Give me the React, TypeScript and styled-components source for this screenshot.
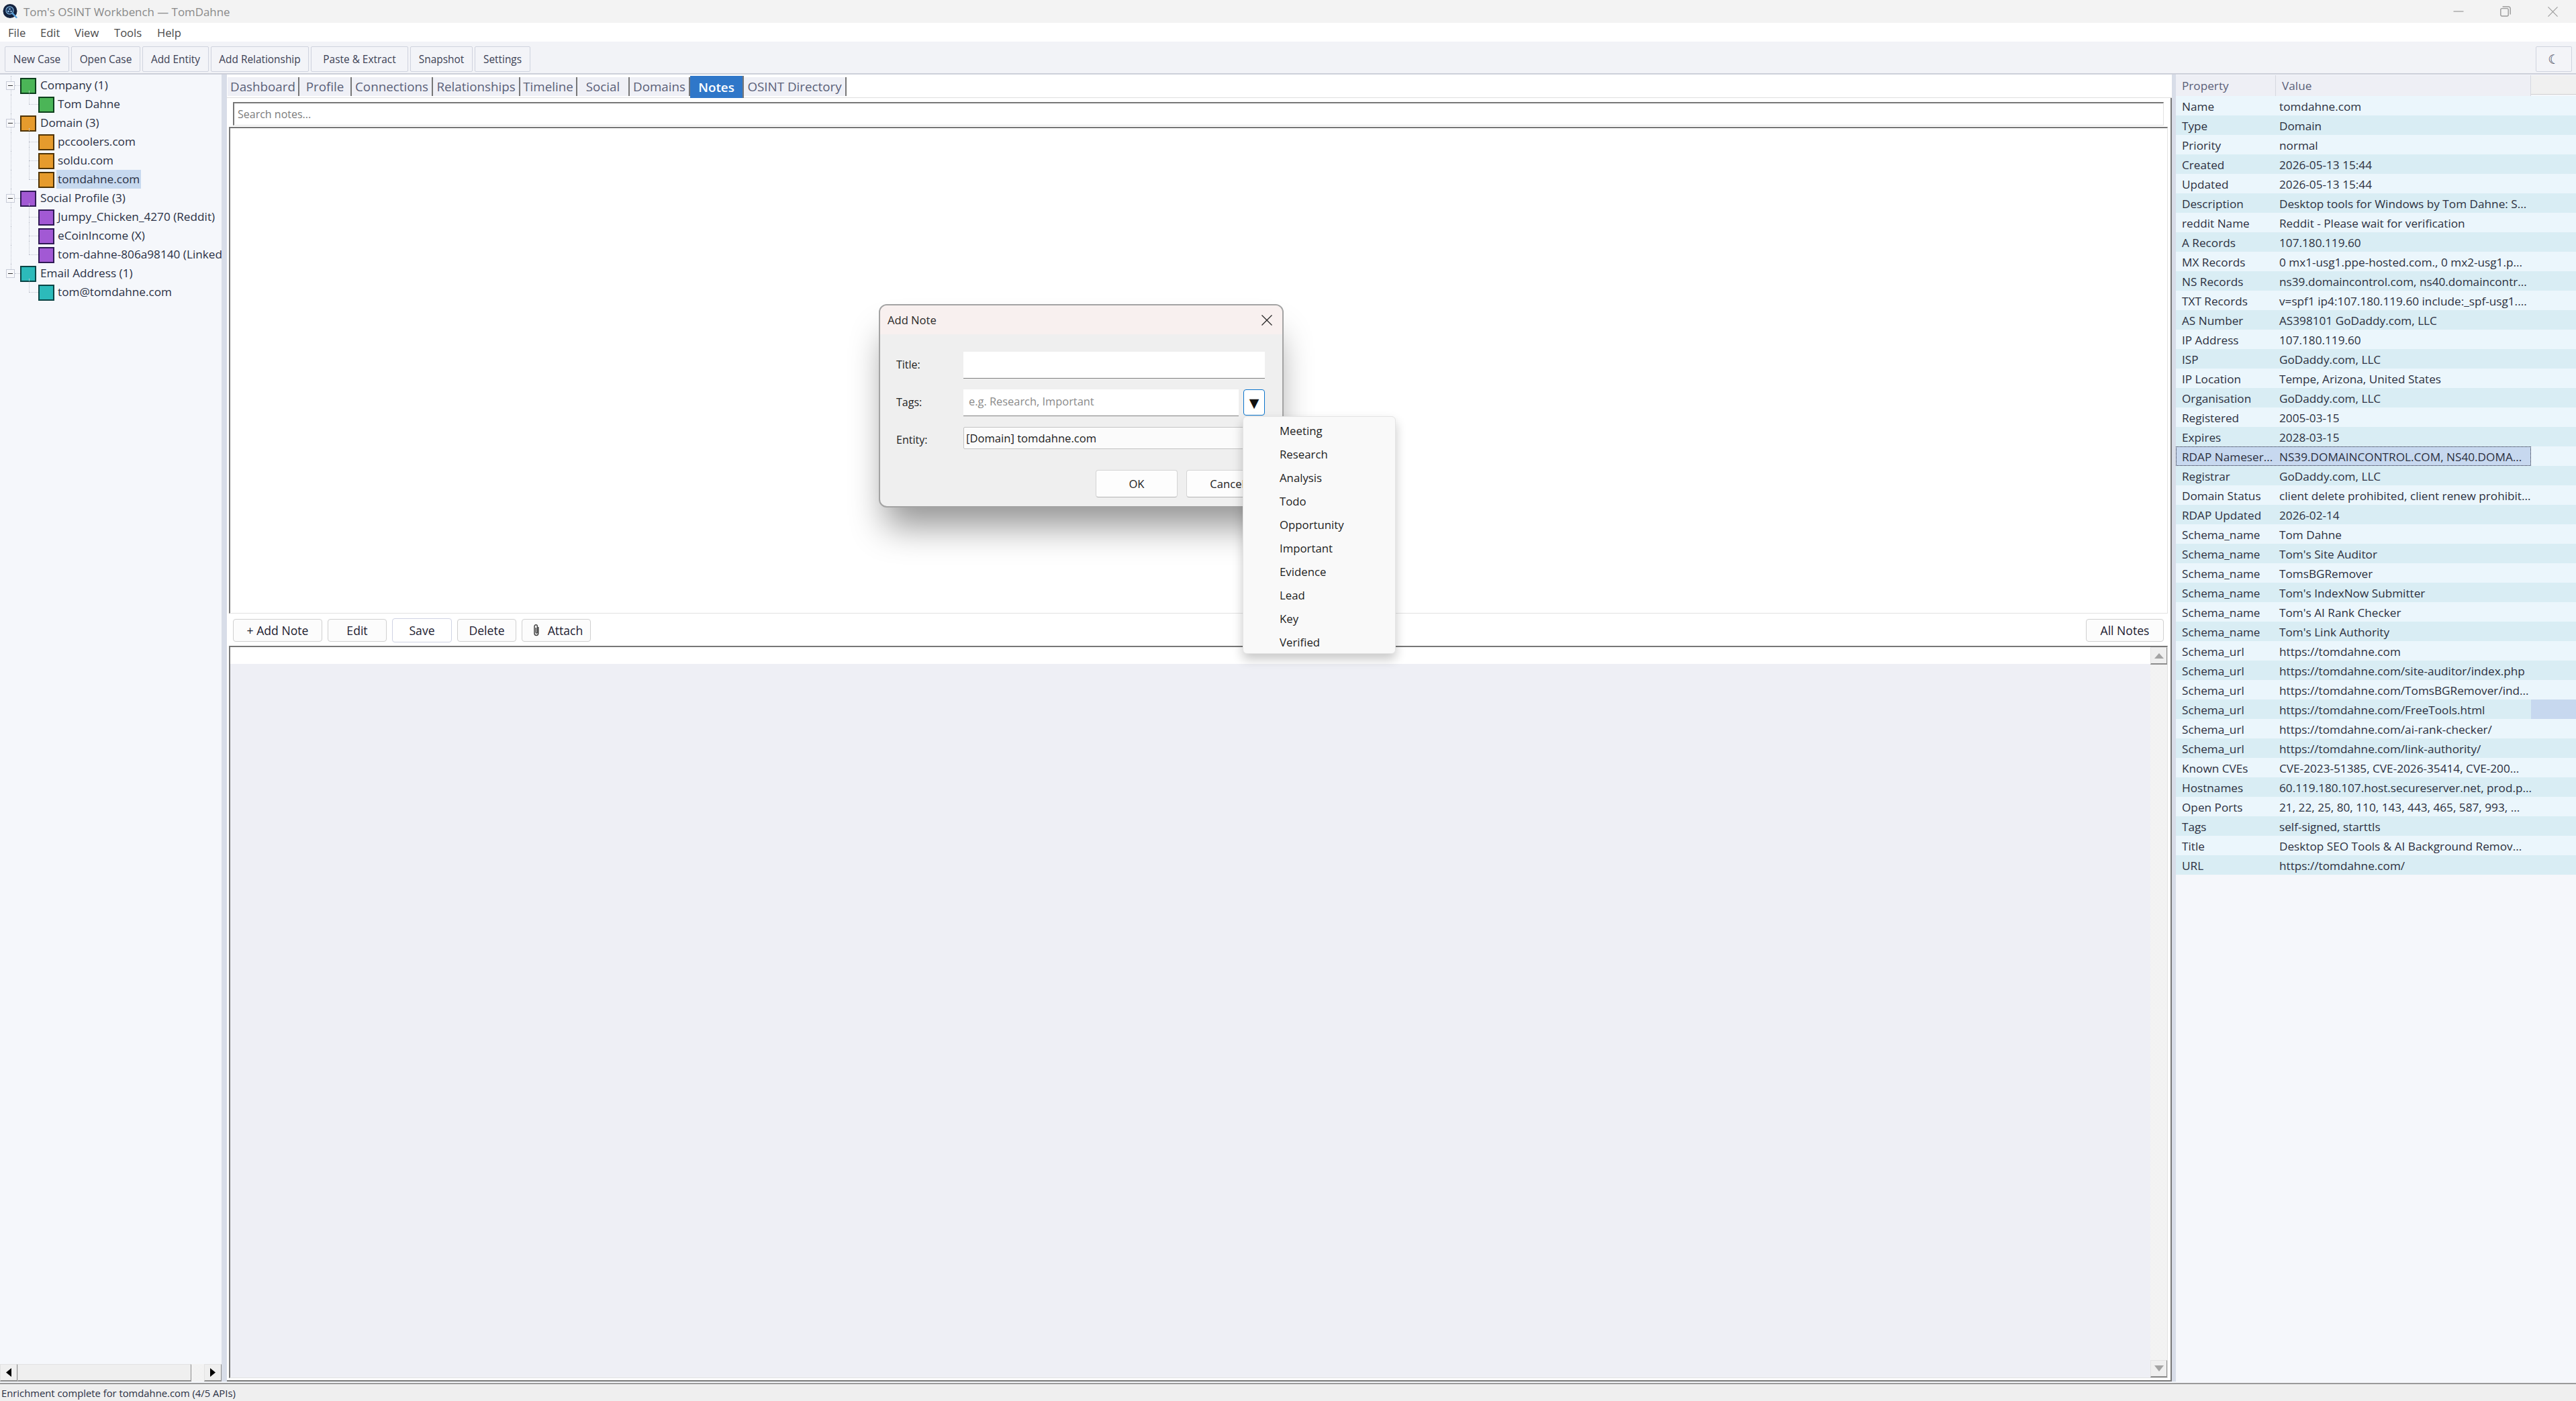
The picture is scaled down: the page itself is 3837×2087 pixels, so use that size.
import React from "react";
import styled, { createGlobalStyle } from "styled-components";

const UI_FONT = `"Open Sans", "Noto Sans", "Liberation Sans", sans-serif`;

const GlobalStyle = createGlobalStyle`
  html, body {
    margin: 0;
    padding: 0;
    background: #f5f7fb;
  }
  * {
    box-sizing: border-box;
  }
`;

const Shell = styled.div`
  position: relative;
  width: 3837px;
  height: 2087px;
  overflow: hidden;
  display: flex;
  flex-direction: column;
  font-family: ${UI_FONT};
  font-size: 17.2px;
  color: #2c3040;
`;

const TitleBar = styled.div`
  height: 34px;
  flex: none;
  background: #f3f3f3;
  display: flex;
  align-items: center;
  padding-left: 4px;
  color: #8a8a8a;
  font-size: 16.9px;
`;

const AppTitle = styled.span`
  margin-left: 7px;
  flex: 1;
`;

const WindowButton = styled.div`
  width: 70px;
  height: 34px;
  display: flex;
  align-items: center;
  justify-content: center;
`;

const MenuBar = styled.div`
  height: 28px;
  flex: none;
  background: #fff;
  display: flex;
  align-items: center;
  color: #4a4a4a;
  font-size: 16.6px;
  padding-left: 12px;
`;

const MenuItem = styled.span<{ $w: number }>`
  width: ${(p) => p.$w}px;
`;

const ToolBar = styled.div`
  height: 49px;
  flex: none;
  background: #f2f3f7;
  border-bottom: 2px solid #cdd0da;
  display: flex;
  align-items: flex-start;
  padding: 7px 6px 0 7px;
  gap: 3px;
`;

const ToolButton = styled.div<{ $w: number }>`
  width: ${(p) => p.$w}px;
  height: 38px;
  flex: none;
  border: 1px solid #cfd3de;
  border-radius: 2px;
  background: #f3f4f8;
  color: #3c4154;
  font-size: 15.4px;
  display: flex;
  align-items: center;
  justify-content: center;
`;

const ThemeButton = styled(ToolButton)`
  margin-left: auto;
  font-family: "DejaVu Sans", sans-serif;
  font-size: 19px;
`;

const MainRow = styled.div`
  flex: 1;
  min-height: 0;
  display: flex;
`;

const TreePanel = styled.div`
  width: 330px;
  flex: none;
  background: #f5f7fb;
  display: flex;
  flex-direction: column;
  padding-top: 2px;
  overflow: hidden;
`;

const TreeBody = styled.div`
  position: relative;
  flex: 1;
  min-height: 0;
`;

const TreeRow = styled.div`
  height: 28px;
  display: flex;
  align-items: center;
  position: relative;
  white-space: nowrap;
`;

const Toggle = styled.div`
  position: absolute;
  left: 9px;
  top: 8px;
  width: 13px;
  height: 13px;
  border: 1px solid #c8ccd8;
  background: #f7f8fb;
  display: flex;
  align-items: center;
  justify-content: center;
  &::after {
    content: "";
    width: 7px;
    height: 1px;
    background: #333;
  }
`;

const Guide = styled.div<{ $child?: boolean; $last?: boolean }>`
  position: absolute;
  left: ${(p) => (p.$child ? 43 : 16)}px;
  top: ${(p) => (p.$child ? -6 : 0)}px;
  bottom: ${(p) => (p.$last ? 14 : 0)}px;
  border-left: 1px dotted #c2c6d0;
`;

const GuideArm = styled.div<{ $child?: boolean }>`
  position: absolute;
  left: ${(p) => (p.$child ? 43 : 22)}px;
  width: ${(p) => (p.$child ? 14 : 8)}px;
  top: 14px;
  border-top: 1px dotted #c2c6d0;
`;

const Swatch = styled.div<{ $fill: string; $edge: string }>`
  width: 24px;
  height: 24px;
  flex: none;
  background: ${(p) => p.$fill};
  border: 2px solid ${(p) => p.$edge};
  margin-top: 1px;
`;

const TreeLabel = styled.span<{ $child?: boolean; $selected?: boolean }>`
  height: 28px;
  line-height: 28px;
  margin-left: ${(p) => (p.$child ? 3 : 4)}px;
  padding: 0 2px;
  background: ${(p) => (p.$selected ? "#c7d9ef" : "transparent")};
  color: #2a3044;
`;

const ParentIndent = styled.div`
  width: 30px;
  flex: none;
`;

const ChildIndent = styled.div`
  width: 57px;
  flex: none;
`;

const HScroll = styled.div`
  height: 26px;
  flex: none;
  display: flex;
  background: repeating-conic-gradient(#fff 0 25%, #e6e6e6 0 50%) 0 0 / 2px 2px;
`;

const ScrollBtn = styled.div<{ $w?: number }>`
  width: ${(p) => p.$w ?? 25}px;
  flex: none;
  background: #efefef;
  border-top: 1px solid #e2e2e2;
  border-left: 1px solid #e2e2e2;
  border-right: 1px solid #8c8c8c;
  border-bottom: 2px solid #8c8c8c;
  display: flex;
  align-items: center;
  justify-content: center;
`;

const HTrack = styled.div`
  flex: 1;
`;

const Splitter = styled.div<{ $w: number }>`
  width: ${(p) => p.$w}px;
  flex: none;
  background: #d8dde8;
`;

const Center = styled.div`
  flex: 1;
  min-width: 0;
  background: #fff;
  display: flex;
  flex-direction: column;
  padding-top: 2px;
`;

const TabBar = styled.div`
  height: 33px;
  flex: none;
  display: flex;
  align-items: flex-end;
  padding-left: 1px;
  border-bottom: 1px solid #dfdfdf;
`;

const Tab = styled.div<{ $w: number; $active?: boolean }>`
  width: ${(p) => p.$w}px;
  height: ${(p) => (p.$active ? 33 : 28)}px;
  margin-bottom: ${(p) => (p.$active ? -1 : 2)}px;
  flex: none;
  background: ${(p) => (p.$active ? "#2f77c9" : "#eff0f6")};
  color: ${(p) => (p.$active ? "#fff" : "#5a6078")};
  font-weight: ${(p) => (p.$active ? 600 : 500)};
  font-size: 18.8px;
  border-right: 2px solid #777;
  display: flex;
  align-items: center;
  justify-content: center;
  white-space: nowrap;
`;

const TabPane = styled.div`
  flex: 1;
  min-height: 0;
  display: flex;
  flex-direction: column;
  border-right: 2px solid #777;
  border-bottom: 2px solid #777;
  padding: 6px 4px 3px 3px;
`;

const SearchBox = styled.div`
  height: 35px;
  flex: none;
  margin: 0 6px 2px 6px;
  border-top: 2px solid #777;
  border-left: 2px solid #777;
  border-bottom: 1px solid #e2e2e2;
  border-right: 1px solid #e2e2e2;
  color: #7c7c7c;
  font-size: 16px;
  display: flex;
  align-items: center;
  padding-left: 5px;
`;

const NotesList = styled.div`
  height: 725px;
  flex: none;
  border-top: 2px solid #777;
  border-left: 2px solid #777;
  border-right: 1px solid #e2e2e2;
  border-bottom: 1px solid #e2e2e2;
`;

const NoteActions = styled.div`
  height: 48px;
  flex: none;
  display: flex;
  align-items: center;
  gap: 8px;
  padding: 2px 6px 0 6px;
`;

const ActionButton = styled.div<{ $w: number; $hover?: boolean; $far?: boolean }>`
  width: ${(p) => p.$w}px;
  height: ${(p) => (p.$hover ? 36 : 34)}px;
  flex: none;
  margin-left: ${(p) => (p.$far ? "auto" : 0)};
  border: 1px solid ${(p) => (p.$hover ? "#cfd3e4" : "#d0d0d0")};
  border-radius: 4px;
  background: ${(p) => (p.$hover ? "#fff" : "#fcfcfc")};
  color: #1c2030;
  font-size: 17.6px;
  display: flex;
  align-items: center;
  justify-content: center;
  gap: 11px;
`;

const AttachButton = styled(ActionButton)`
  padding-left: 4px;
`;

const DetailPanel = styled.div`
  flex: 1;
  min-height: 0;
  display: flex;
  border-top: 2px solid #777;
  border-left: 2px solid #777;
  border-right: 1px solid #e2e2e2;
  border-bottom: 1px solid #e2e2e2;
`;

const DetailBody = styled.div`
  flex: 1;
  display: flex;
  flex-direction: column;
`;

const DetailStrip = styled.div`
  height: 25px;
  flex: none;
  background: #fff;
`;

const DetailFill = styled.div`
  flex: 1;
  background: #eeeff5;
`;

const VScroll = styled.div`
  width: 25px;
  flex: none;
  display: flex;
  flex-direction: column;
  justify-content: space-between;
  background: repeating-conic-gradient(#fff 0 25%, #e6e6e6 0 50%) 0 0 / 2px 2px;
`;

const VBtn = styled(ScrollBtn)`
  width: 25px;
  height: 26px;
`;

const PropsPanel = styled.div`
  width: 596px;
  flex: none;
  background: #f5f7fb;
  padding-top: 1px;
  display: flex;
  flex-direction: column;
`;

const PropsHeader = styled.div`
  height: 31px;
  flex: none;
  display: flex;
  color: #5a6078;
`;

const HeadCell = styled.div<{ $w: number; $edge?: boolean }>`
  width: ${(p) => p.$w}px;
  flex: none;
  background: #eeeff5;
  border-right: ${(p) => (p.$edge ? "1px solid #d6d8e0" : "none")};
  display: flex;
  align-items: center;
  padding-left: 9px;
`;

const HeadRest = styled.div`
  flex: 1;
  background: #f0f0f0;
  border-bottom: 1px solid #d0d0d0;
  margin-bottom: 2px;
`;

const PropRow = styled.div<{ $odd: boolean }>`
  height: 29px;
  flex: none;
  display: flex;
  background: ${(p) => (p.$odd ? "#d9edf4" : "#ebf6fc")};
`;

const PropCells = styled.div<{ $selected?: boolean }>`
  width: 529px;
  flex: none;
  display: flex;
  align-items: center;
  padding-top: 1px;
  background: ${(p) => (p.$selected ? "#c7d8ef" : "transparent")};
  outline: ${(p) => (p.$selected ? "1px dotted #223" : "none")};
  outline-offset: -1px;
`;

const RowEnd = styled.div<{ $selected?: boolean }>`
  flex: 1;
  background: ${(p) => (p.$selected ? "#c7d8ef" : "transparent")};
`;

const PropName = styled.span`
  width: 154px;
  flex: none;
  padding-left: 9px;
  white-space: nowrap;
`;

const PropValue = styled.span`
  white-space: nowrap;
`;

const StatusBar = styled.div`
  height: 27px;
  flex: none;
  background: #efefef;
  border-top: 2px solid #9a9a9a;
  font-size: 14.8px;
  display: flex;
  align-items: center;
  padding-left: 2px;
  color: #2a3044;
  margin-top: 2px;
`;

const Dialog = styled.div`
  position: absolute;
  left: 1309px;
  top: 453px;
  width: 603px;
  height: 303px;
  border: 2px solid #a3a3a3;
  border-radius: 12px;
  background: #efefef;
  box-shadow: 0 38px 52px -10px rgba(0, 0, 0, 0.42);
  display: flex;
  flex-direction: column;
  overflow: hidden;
`;

const DialogHead = styled.div`
  height: 43px;
  flex: none;
  background: #f8f0ef;
  display: flex;
  align-items: center;
  justify-content: space-between;
  padding: 0 15px 0 11px;
  color: #2a2a2a;
  font-size: 16.6px;
`;

const DialogForm = styled.div`
  flex: 1;
  display: grid;
  grid-template-columns: 100px 1fr;
  grid-auto-rows: 56px;
  padding: 26px 26px 0 24px;
  align-items: start;
`;

const FieldLabel = styled.label`
  color: #222;
  font-size: 16px;
  padding-top: 8px;
`;

const TextField = styled.div`
  height: 40px;
  background: #fff;
  border-bottom: 1px solid #808080;
  color: #8a8a8a;
  font-size: 16.4px;
  display: flex;
  align-items: center;
  padding: 0 0 4px 8px;
  flex: 1;
`;

const TagsLine = styled.div`
  display: flex;
  gap: 7px;
`;

const TagsArrow = styled.div`
  width: 32px;
  height: 39px;
  flex: none;
  background: #fff;
  border: 1.5px solid #0a74cc;
  border-radius: 4px;
  font-size: 19px;
  color: #111;
  display: flex;
  align-items: center;
  justify-content: center;
  font-family: "DejaVu Sans", sans-serif;
`;

const EntityField = styled.div`
  height: 33px;
  background: #fbfbfb;
  border: 1px solid #c4c4c4;
  border-radius: 2px;
  color: #1c1c1c;
  font-size: 16.6px;
  display: flex;
  align-items: center;
  padding-left: 3px;
`;

const DialogFoot = styled.div`
  height: 57px;
  flex: none;
  display: flex;
  justify-content: flex-end;
  gap: 13px;
  padding: 3px 21px 0 0;
`;

const DialogButton = styled.div`
  width: 122px;
  height: 41px;
  background: #fdfdfd;
  border: 1px solid #d4d4d4;
  border-bottom-color: #b4b4b4;
  border-radius: 4px;
  color: #1c1c1c;
  font-size: 16.6px;
  display: flex;
  align-items: center;
  justify-content: center;
`;

const TagMenu = styled.div`
  position: absolute;
  left: 1851px;
  top: 620px;
  width: 228px;
  height: 354px;
  background: #f9f9f9;
  border: 1px solid #e4e4e4;
  border-radius: 6px;
  box-shadow: 0 8px 16px rgba(0, 0, 0, 0.22);
  display: flex;
  flex-direction: column;
  padding: 3px 0;
`;

const TagOption = styled.div`
  height: 35px;
  flex: none;
  display: flex;
  align-items: center;
  padding-left: 54px;
  color: #1c1c1c;
  font-size: 16.8px;
`;

type TreeGroup = {
  name: string;
  fill: string;
  edge: string;
  children: string[];
};

const TREE: TreeGroup[] = [
  { name: "Company (1)", fill: "#4bb557", edge: "#0d3f1d", children: ["Tom Dahne"] },
  { name: "Domain (3)", fill: "#e69b2d", edge: "#4f3305", children: ["pccoolers.com", "soldu.com", "tomdahne.com"] },
  {
    name: "Social Profile (3)",
    fill: "#a259d4",
    edge: "#2f1a55",
    children: ["Jumpy_Chicken_4270 (Reddit)", "eCoinIncome (X)", "tom-dahne-806a98140 (LinkedIn)"],
  },
  { name: "Email Address (1)", fill: "#2cbaba", edge: "#0a4445", children: ["tom@tomdahne.com"] },
];

const TOOLS: [string, number][] = [
  ["New Case", 96],
  ["Open Case", 103],
  ["Add Entity", 99],
  ["Add Relationship", 146],
  ["Paste & Extract", 145],
  ["Snapshot", 93],
  ["Settings", 83],
];

const TABS: [string, number][] = [
  ["Dashboard", 107],
  ["Profile", 78],
  ["Connections", 121],
  ["Relationships", 130],
  ["Timeline", 85],
  ["Social", 78],
  ["Domains", 90],
  ["Notes", 80],
  ["OSINT Directory", 153],
];

const PROPS: [string, string][] = [
  ["Name", "tomdahne.com"],
  ["Type", "Domain"],
  ["Priority", "normal"],
  ["Created", "2026-05-13 15:44"],
  ["Updated", "2026-05-13 15:44"],
  ["Description", "Desktop tools for Windows by Tom Dahne: S..."],
  ["reddit Name", "Reddit - Please wait for verification"],
  ["A Records", "107.180.119.60"],
  ["MX Records", "0 mx1-usg1.ppe-hosted.com., 0 mx2-usg1.p..."],
  ["NS Records", "ns39.domaincontrol.com, ns40.domaincontr..."],
  ["TXT Records", "v=spf1 ip4:107.180.119.60 include:_spf-usg1...."],
  ["AS Number", "AS398101 GoDaddy.com, LLC"],
  ["IP Address", "107.180.119.60"],
  ["ISP", "GoDaddy.com, LLC"],
  ["IP Location", "Tempe, Arizona, United States"],
  ["Organisation", "GoDaddy.com, LLC"],
  ["Registered", "2005-03-15"],
  ["Expires", "2028-03-15"],
  ["RDAP Nameser...", "NS39.DOMAINCONTROL.COM, NS40.DOMA..."],
  ["Registrar", "GoDaddy.com, LLC"],
  ["Domain Status", "client delete prohibited, client renew prohibit..."],
  ["RDAP Updated", "2026-02-14"],
  ["Schema_name", "Tom Dahne"],
  ["Schema_name", "Tom's Site Auditor"],
  ["Schema_name", "TomsBGRemover"],
  ["Schema_name", "Tom's IndexNow Submitter"],
  ["Schema_name", "Tom's AI Rank Checker"],
  ["Schema_name", "Tom's Link Authority"],
  ["Schema_url", "https://tomdahne.com"],
  ["Schema_url", "https://tomdahne.com/site-auditor/index.php"],
  ["Schema_url", "https://tomdahne.com/TomsBGRemover/ind..."],
  ["Schema_url", "https://tomdahne.com/FreeTools.html"],
  ["Schema_url", "https://tomdahne.com/ai-rank-checker/"],
  ["Schema_url", "https://tomdahne.com/link-authority/"],
  ["Known CVEs", "CVE-2023-51385, CVE-2026-35414, CVE-200..."],
  ["Hostnames", "60.119.180.107.host.secureserver.net, prod.p..."],
  ["Open Ports", "21, 22, 25, 80, 110, 143, 443, 465, 587, 993, ..."],
  ["Tags", "self-signed, starttls"],
  ["Title", "Desktop SEO Tools & AI Background Remov..."],
  ["URL", "https://tomdahne.com/"],
];

const SELECTED_ROW = 18;
const END_SELECTED_ROW = 31;

const TAG_OPTIONS = ["Meeting", "Research", "Analysis", "Todo", "Opportunity", "Important", "Evidence", "Lead", "Key", "Verified"];

const AppLogo = () => (
  <svg width="24" height="24" viewBox="0 0 24 24">
    <circle cx="11" cy="11.5" r="10.5" fill="#14233f" />
    <circle cx="10.5" cy="10.5" r="5.6" fill="#1d3a63" stroke="#7fb2dc" strokeWidth="1.2" />
    <circle cx="10.5" cy="8.4" r="1.2" fill="#9cc7e8" />
    <circle cx="8.4" cy="12" r="1.2" fill="#9cc7e8" />
    <circle cx="12.6" cy="12" r="1.2" fill="#9cc7e8" />
    <path d="M14.6 14.8 L20.5 21" stroke="#5aa2dc" strokeWidth="2.4" strokeLinecap="round" />
  </svg>
);

const MinimizeIcon = () => (
  <svg width="16" height="16" viewBox="0 0 16 16">
    <path d="M0.5 8 H15.5" stroke="#9a9a9a" strokeWidth="1.2" />
  </svg>
);

const RestoreIcon = () => (
  <svg width="16" height="16" viewBox="0 0 16 16" fill="none" stroke="#9a9a9a" strokeWidth="1.4">
    <rect x="0.8" y="3.6" width="11.4" height="11.4" rx="2" />
    <path d="M3.6 1 H12.5 A2.6 2.6 0 0 1 15.2 3.6 V12.4" />
  </svg>
);

const CloseIcon = ({ color, size }: { color: string; size: number }) => (
  <svg width={size} height={size} viewBox="0 0 16 16">
    <path d="M0.5 0.5 L15.5 15.5 M15.5 0.5 L0.5 15.5" stroke={color} strokeWidth="1.2" />
  </svg>
);

const PaperClip = () => (
  <svg width="12" height="20" viewBox="0 0 12 20" fill="none" stroke="#444" strokeWidth="1.5">
    <path d="M8.8 5 V14.5 A2.9 2.9 0 0 1 3 14.5 V4 A2.2 2.2 0 0 1 7.4 4 V13 A1.1 1.1 0 0 1 5.2 13 V6" />
  </svg>
);

const Tri = ({ dir, color, w, h }: { dir: "l" | "r" | "u" | "d"; color: string; w: number; h: number }) => {
  const pts = {
    l: `${w},0 ${w},${h} 0,${h / 2}`,
    r: `0,0 0,${h} ${w},${h / 2}`,
    u: `0,${h} ${w},${h} ${w / 2},0`,
    d: `0,0 ${w},0 ${w / 2},${h}`,
  }[dir];
  return (
    <svg width={w} height={h} viewBox={`0 0 ${w} ${h}`}>
      <polygon points={pts} fill={color} />
    </svg>
  );
};

export default function App() {
  return (
    <Shell>
      <GlobalStyle />
      <TitleBar>
        <AppLogo />
        <AppTitle>Tom's OSINT Workbench — TomDahne</AppTitle>
        <WindowButton>
          <MinimizeIcon />
        </WindowButton>
        <WindowButton>
          <RestoreIcon />
        </WindowButton>
        <WindowButton>
          <CloseIcon color="#9a9a9a" size={15} />
        </WindowButton>
      </TitleBar>
      <MenuBar>
        <MenuItem $w={48}>File</MenuItem>
        <MenuItem $w={51}>Edit</MenuItem>
        <MenuItem $w={59}>View</MenuItem>
        <MenuItem $w={64}>Tools</MenuItem>
        <MenuItem $w={50}>Help</MenuItem>
      </MenuBar>
      <ToolBar>
        {TOOLS.map(([label, w]) => (
          <ToolButton key={label} $w={w}>
            {label}
          </ToolButton>
        ))}
        <ThemeButton $w={54}>☾</ThemeButton>
      </ToolBar>
      <MainRow>
        <TreePanel>
          <TreeBody>
            {TREE.map((group, gi) => (
              <React.Fragment key={group.name}>
                <TreeRow>
                  <Guide $last={gi === TREE.length - 1} />
                  <Toggle />
                  <GuideArm />
                  <ParentIndent />
                  <Swatch $fill={group.fill} $edge={group.edge} />
                  <TreeLabel>{group.name}</TreeLabel>
                </TreeRow>
                {group.children.map((child, ci) => (
                  <TreeRow key={child}>
                    {gi < TREE.length - 1 && <Guide />}
                    <Guide $child $last={ci === group.children.length - 1} />
                    <GuideArm $child />
                    <ChildIndent />
                    <Swatch $fill={group.fill} $edge={group.edge} />
                    <TreeLabel $child $selected={child === "tomdahne.com"}>
                      {child}
                    </TreeLabel>
                  </TreeRow>
                ))}
              </React.Fragment>
            ))}
          </TreeBody>
          <HScroll>
            <ScrollBtn $w={26}>
              <Tri dir="l" color="#000" w={8} h={13} />
            </ScrollBtn>
            <ScrollBtn $w={259} />
            <HTrack />
            <ScrollBtn $w={26}>
              <Tri dir="r" color="#000" w={8} h={13} />
            </ScrollBtn>
          </HScroll>
        </TreePanel>
        <Splitter $w={8} />
        <Center>
          <TabBar>
            {TABS.map(([label, w]) => (
              <Tab key={label} $w={w} $active={label === "Notes"}>
                {label}
              </Tab>
            ))}
          </TabBar>
          <TabPane>
            <SearchBox>Search notes...</SearchBox>
            <NotesList />
            <NoteActions>
              <ActionButton $w={133}>+ Add Note</ActionButton>
              <ActionButton $w={88}>Edit</ActionButton>
              <ActionButton $w={89} $hover>
                Save
              </ActionButton>
              <ActionButton $w={88}>Delete</ActionButton>
              <AttachButton $w={103}>
                <PaperClip />
                Attach
              </AttachButton>
              <ActionButton $w={116} $far>
                All Notes
              </ActionButton>
            </NoteActions>
            <DetailPanel>
              <DetailBody>
                <DetailStrip />
                <DetailFill />
              </DetailBody>
              <VScroll>
                <VBtn>
                  <Tri dir="u" color="#a4a4a4" w={14} h={8} />
                </VBtn>
                <VBtn>
                  <Tri dir="d" color="#a4a4a4" w={14} h={9} />
                </VBtn>
              </VScroll>
            </DetailPanel>
          </TabPane>
        </Center>
        <Splitter $w={6} />
        <PropsPanel>
          <PropsHeader>
            <HeadCell $w={149} $edge>
              Property
            </HeadCell>
            <HeadCell $w={380} $edge>
              Value
            </HeadCell>
            <HeadRest />
          </PropsHeader>
          {PROPS.map(([name, value], i) => (
            <PropRow key={`${name}-${i}`} $odd={i % 2 === 1}>
              <PropCells $selected={i === SELECTED_ROW}>
                <PropName>{name}</PropName>
                <PropValue>{value}</PropValue>
              </PropCells>
              <RowEnd $selected={i === END_SELECTED_ROW} />
            </PropRow>
          ))}
        </PropsPanel>
      </MainRow>
      <StatusBar>Enrichment complete for tomdahne.com (4/5 APIs)</StatusBar>

      <Dialog>
        <DialogHead>
          Add Note
          <CloseIcon color="#222" size={16} />
        </DialogHead>
        <DialogForm>
          <FieldLabel>Title:</FieldLabel>
          <TextField />
          <FieldLabel>Tags:</FieldLabel>
          <TagsLine>
            <TextField>e.g. Research, Important</TextField>
            <TagsArrow>▼</TagsArrow>
          </TagsLine>
          <FieldLabel>Entity:</FieldLabel>
          <EntityField>[Domain] tomdahne.com</EntityField>
        </DialogForm>
        <DialogFoot>
          <DialogButton>OK</DialogButton>
          <DialogButton>Cancel</DialogButton>
        </DialogFoot>
      </Dialog>
      <TagMenu>
        {TAG_OPTIONS.map((tag) => (
          <TagOption key={tag}>{tag}</TagOption>
        ))}
      </TagMenu>
    </Shell>
  );
}
